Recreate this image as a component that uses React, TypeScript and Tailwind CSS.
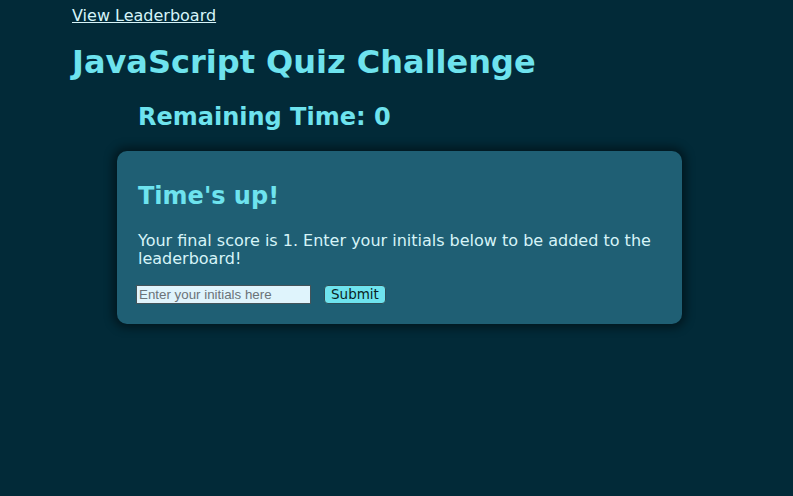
import React, { useState } from 'react';

// Quiz end screen
const App = () => {
  const [initials, setInitials] = useState('');

  return (
    <div className="min-h-[496px] bg-[#022a38] font-['DejaVu_Sans',Verdana,sans-serif] text-[#6ee3ee]">
      <div className="pl-[72px] pt-[4px]">
        <a href="#" className="text-[16px] leading-[20px] text-[#d6f4f8] underline">
          View Leaderboard
        </a>
        <h1 className="mt-[14px] text-[32px] leading-[40px] font-bold">JavaScript Quiz Challenge</h1>
      </div>

      <div className="pl-[138px] mt-[21px]">
        <h2 className="text-[24px] leading-[28px] font-bold">Remaining Time: 0</h2>
      </div>

      <div className="ml-[117px] mt-[20px] w-[565px] rounded-[10px] bg-[#1f5f74] px-[21px] pt-[30px] pb-[20px] shadow-[0_0_10px_4px_rgba(0,0,0,0.45)]">
        <h3 className="text-[24px] leading-[30px] font-bold">Time's up!</h3>
        <p className="mt-[21px] text-[16px] leading-[18px] text-[#d6f4f8]">
          Your final score is 1. Enter your initials below to be added to the leaderboard!
        </p>
        <form className="mt-[17px] flex items-center gap-[13px] -ml-[2px]" onSubmit={(e) => e.preventDefault()}>
          <input
            value={initials}
            onChange={(e) => setInitials(e.target.value)}
            placeholder="Enter your initials here"
            className="h-[19px] w-[175px] border border-[#44545a] bg-[#dff4fc] px-[2px] font-['Liberation_Sans',Arial,sans-serif] text-[13.33px] text-black placeholder:text-[#6b7378]"
          />
          <button
            type="submit"
            className="h-[19px] rounded-[4px] border border-[#2d4e58] bg-[#6ee3ee] px-[6px] text-[13.5px] leading-[15px] text-[#0b1e24]"
          >
            Submit
          </button>
        </form>
      </div>
    </div>
  );
};

export default App;
